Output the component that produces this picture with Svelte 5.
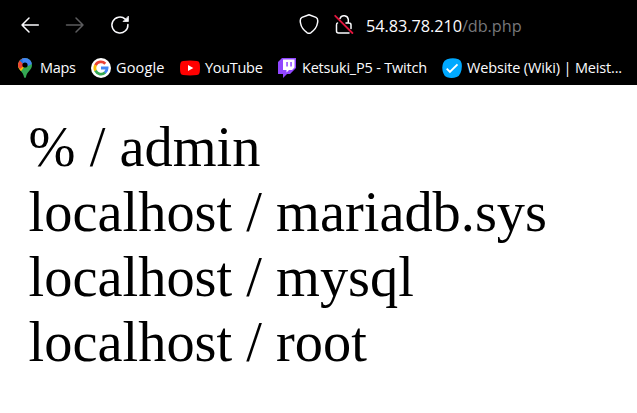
<script>
  const rows = ['% / admin', 'localhost / mariadb.sys', 'localhost / mysql', 'localhost / root'];
</script>

<main>
  <header>
    <nav class="toolbar">
      <svg class="back" width="20" height="20" viewBox="0 0 20 20"><path d="M18.3 10H2M9 3 2 10l7 7" /></svg>
      <svg class="forward" width="20" height="20" viewBox="0 0 20 20"><path d="M1.5 10H18M11 3l7 7-7 7" /></svg>
      <svg class="reload" width="20" height="20" viewBox="0 0 20 20"><path d="M17.9 9.500A8 8 0 1 1 15.300 4.100" /><path class="solid" d="M18.400 1.500v5h-5z" /></svg>
      <svg class="shield" width="20" height="22" viewBox="0 0 20 22"><path d="M10 1.700 3 4.400C1.100 5.200 1.100 8 1.500 10c.7 4.400 3 7.200 6.800 9.800q1.700 1.100 3.400 0c3.800-2.600 6.100-5.400 6.800-9.800.4-2 .4-4.800-1.500-5.600z" /></svg>
      <svg class="lock" width="20" height="22" viewBox="0 0 20 22"><path d="M6 5.500a4.300 4.300 0 0 1 8.300 1V10M3.500 10C2.700 10 2.500 11 2.500 12v6q0 2 2 2H15M12 10H15q2 0 2 2v3.500" /><path class="slash" d="M1.200 2.800 18.400 20" /></svg>
      <span class="url">54.83.78.210<span>/db.php</span></span>
    </nav>
    <nav class="bookmarks">
      <a class="maps">
        <svg width="20" height="20" viewBox="0 0 20 20">
          <clipPath id="pin"><path d="M10 0a7 7 0 0 0-7 7c0 5 5 6 6 12q1 2 2 0c1-6 6-7 6-12a7 7 0 0 0-7-7z" /></clipPath>
          <g clip-path="url(#pin)"><path fill="#34a853" d="M0 0h20v20H0z" /><path fill="#fbbc04" d="M0 5h10v3L5.2 14.3 0 12z" /><path fill="#ea4335" d="M0 0h8l2 7-5 4-5-5z" /><path fill="#1a73e8" d="M4.5 2.2 10 0v8z" /><path fill="#4285f4" d="M7 0h12v5l-6 3-5-3z" /></g>
          <circle cx="10" cy="7" r="2.6" fill="#000" />
        </svg><span>Maps</span>
      </a>
      <a class="google">
        <svg width="20" height="20" viewBox="0 0 20 20">
          <circle cx="10" cy="10" r="10" fill="#fff" />
          <g fill="none" stroke-width="2.8"><path stroke="#ea4335" d="M4.5 7.3A6.1 6.1 0 0 1 14.3 5.7" /><path stroke="#fbbc05" d="M4.6 12.9A6.1 6.1 0 0 1 4.6 7.1" /><path stroke="#34a853" d="M14.1 14.5A6.1 6.1 0 0 1 4.5 12.7" /><path stroke="#4285f4" d="M10 10h6.1a6.1 6.1 0 0 1-2.2 4.7" /></g>
        </svg><span>Google</span>
      </a>
      <a class="youtube">
        <svg width="20" height="20" viewBox="0 0 20 20"><path fill="#f00" d="M3 3q7-.8 14 0 2.500.3 2.700 2.800.6 4.200 0 8.400Q19.500 16.700 17 17q-7 .8-14 0Q.5 16.700.3 14.200q-.6-4.200 0-8.400Q.5 3.300 3 3z" /><path fill="#fff" d="m8 7 5.300 3L8 13z" /></svg><span>YouTube</span>
      </a>
      <a class="twitch">
        <svg width="20" height="20" viewBox="0 0 20 20"><path fill="#9146ff" d="M5 0h14v10l-6 6h-3l-4 4v-4H1V4z" /><path fill="#fff" d="M6 1.500h11.500v8L15 12h-3l-2.500 2.500V12H6z" /><path fill="#9146ff" d="M9.300 4h1.500v4.500H9.300zM13.300 4h1.500v4.500h-1.500z" /></svg><span>Ketsuki_P5 - Twitch</span>
      </a>
      <a class="meister">
        <svg width="20" height="20" viewBox="0 0 20 20"><path fill="#00a9ff" d="M5 1.200Q11-.8 16.500 1.200q2.500 1 3.100 4 .9 5-1.100 9.800-1.200 3-3.800 4-4.700 1.800-9.700.3-2.600-.8-3.500-3.800Q-.8 10 1.200 5 2.200 2.200 5 1.200z" /><path fill="none" stroke="#fff" stroke-width="1.900" d="m4.700 10.700 3.200 3.200 7.600-7.600" /></svg><span>Website (Wiki) | Meist...</span>
      </a>
    </nav>
  </header>
  <section>
    {#each rows as row}
      <div>{row}</div>
    {/each}
  </section>
</main>

<style>
  :global(body) { margin: 0; background: #fff; }
  main { width: 637px; height: 413px; overflow: hidden; background: #fff; }
  header { height: 85px; background: #000; color: #fbfbfe; font-family: "Open Sans", "Noto Sans", sans-serif; }
  svg { display: block; flex: none; }
  .toolbar { height: 50px; display: flex; align-items: center; padding-left: 20px; }
  .toolbar path { fill: none; stroke: #fbfbfe; stroke-width: 1.5; stroke-linecap: round; stroke-linejoin: round; }
  .toolbar .solid { fill: #fbfbfe; stroke-width: .8; }
  .toolbar .slash { stroke: #e2153d; stroke-width: 1.8; }
  .forward { margin-left: 25px; }
  .forward path { stroke: #5c5c5e; }
  .reload { margin-left: 25px; }
  .shield { margin-left: 169px; margin-top: -3px; }
  .lock { margin-left: 15px; margin-top: -3px; }
  .url { margin-left: 12px; margin-top: 1px; font-size: 16.3px; letter-spacing: -.06px; white-space: nowrap; }
  .url span { color: #77777a; }
  .bookmarks { display: flex; height: 35px; box-sizing: border-box; padding-left: 15px; align-items: center; font-size: 14.5px; }
  a { display: flex; align-items: center; white-space: nowrap; flex: none; }
  a span { margin-left: 5px; letter-spacing: -.3px; line-height: 20px; }
  .maps { width: 76px; }
  .google { width: 89px; }
  .google span { letter-spacing: .15px; }
  .youtube { width: 97px; }
  .youtube span { letter-spacing: -.3px; }
  .twitch { width: 165px; }
  .twitch span { letter-spacing: -.2px; }
  .meister span { letter-spacing: -.15px; }
  section { padding: 30px 0 0 28.6px; font: 56.4px/65px "Liberation Serif", "Times New Roman", serif; color: #000; }
</style>
